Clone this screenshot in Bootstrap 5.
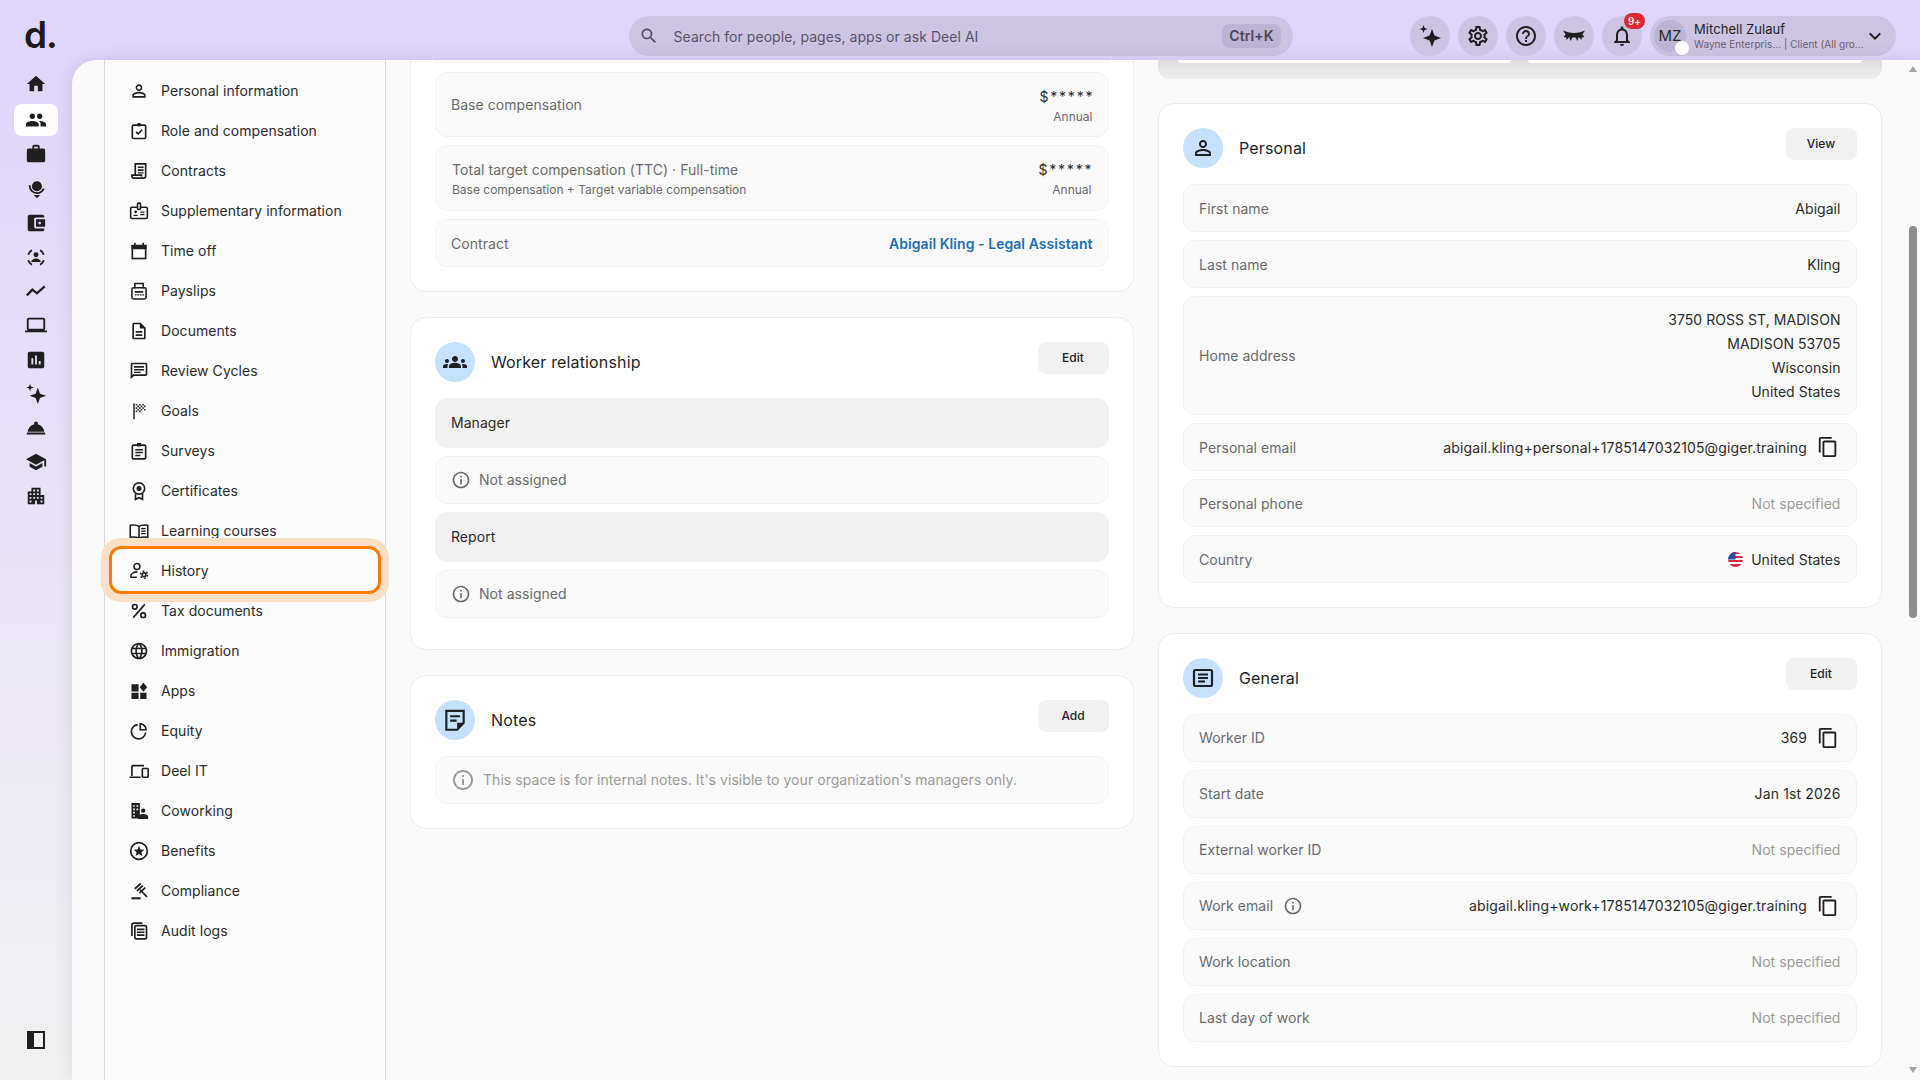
<!DOCTYPE html>
<html lang="en">
<head>
    <meta charset="UTF-8">
    <meta name="viewport" content="width=device-width, initial-scale=1.0">
    <title>Abigail Kling</title>
    <link rel="stylesheet" href="https://cdn.jsdelivr.net/npm/bootstrap@5.3.0/dist/css/bootstrap.min.css">
    <style>
        html, body { height: 100%; overflow: hidden; }
        body { font-family: Inter, "Liberation Sans", sans-serif; font-size: 14px; letter-spacing: .05px; color: #2b2b2b; background: #fafafa; }
        .ico { width: 20px; height: 20px; flex: none; fill: currentColor; color: #1f1f1f; }
        .ico-16 { width: 18px; height: 18px; }
        .ico-22 { width: 22px; height: 22px; margin-left: 1.5px; margin-right: 2px; }
        .ico-24 { width: 24px; height: 24px; }
        .ico-26 { width: 26px; height: 26px; }

        /* top bar */
        .top-bar { height: 60px; padding-top: 12px; background: #e0d6fa; flex: none; }
        .logo-box { width: 72px; padding-left: 24px; font-size: 37px; font-weight: 600; letter-spacing: -1px; line-height: 1; color: #1b1b1b; padding-bottom: 3px; }
        .search-box { width: 664px; height: 40px; margin-left: 557px; background: #cdc4e2; border-radius: 20px; padding: 0 12px 0 10px; color: #5a5466; }
        .search-box .ico { color: #55505f; margin-right: 14.5px; }
        .kbd-chip { background: #bdb3d3; border-radius: 8px; height: 24px; width: 59px; font-weight: 600; color: #4d4759; line-height: 24px; text-align: center; }
        .round-btn { width: 40px; height: 40px; background: #cdc4e2; border-radius: 50%; position: relative; }
        .note-badge { position: absolute; top: -3px; left: 22px; width: 21px; height: 16px; border-radius: 8px; background: #dc2a35; color: #fff; font-size: 10px; line-height: 16px; text-align: center; font-weight: 500; }
        .user-pill { width: 246px; height: 40px; background: #cdc4e2; border-radius: 20px; padding: 0 12px 0 4px; margin-right: 24px; }
        .user-avatar { width: 32px; height: 32px; background: #bdb3d3; border-radius: 50%; font-size: 15px; line-height: 32px; text-align: center; position: relative; color: #2b2b2b; flex: none; }
        .user-dot { position: absolute; right: -2.6px; bottom: -3px; width: 14px; height: 14px; background: #fff; border-radius: 50%; }
        .user-text { min-width: 0; }
        .user-name { font-size: 13px; line-height: 16px; color: #1f1f1f; }
        .user-sub { font-size: 10px; line-height: 14px; color: #66606f; white-space: nowrap; }

        /* rail */
        .lower-wrap { height: 1020px; background: linear-gradient(180deg, #e0d6fa 0%, #e8e3f5 45%, #f2f2f2 100%); }
        .side-rail { width: 72px; flex: none; padding: 8px 0 0; }
        .rail-item { width: 44px; height: 32px; margin: 0 auto 2.2px; border-radius: 8px; color: #1b1b1b; }
        .rail-item .ico { width: 22px; height: 22px; }
        .rail-item.is-on { background: #fff; margin-top: 4.2px; }
        .rail-item .ico.ico-16 { width: 18px; height: 18px; }
        .rail-foot { margin-top: 511.6px; }

        /* panel */
        .main-panel { background: #fafafa; border-top-left-radius: 24px; box-shadow: 0 0 18px rgba(0, 0, 0, .1); overflow: hidden; }
        .sub-nav { width: 282px; margin-left: 32px; flex: none; background: #fcfcfc; border-left: 1px solid #d9d9d9; border-right: 1px solid #d9d9d9; padding-top: 10.5px; }
        .sub-nav .nav-link { height: 40px; padding: 0 0 0 24px; display: flex; align-items: center; gap: 12px; color: #2b2b2b; position: relative; }
        .sub-nav .is-marked::after { content: ""; position: absolute; top: -4.5px; bottom: -3.5px; left: 4px; right: 4px; border: 3px solid #ff7a00; border-radius: 12px; box-shadow: 0 0 0 8px #fbe0c8; z-index: 1; }
        .content-area { padding-left: 24px; gap: 24.5px; }
        .col-left, .col-right { width: 723.5px; }

        /* cards */
        .card.info-card { --bs-card-border-radius: 16px; --bs-card-border-color: #ececec; --bs-card-spacer-x: 24px; --bs-card-spacer-y: 24px; margin-bottom: 24.5px; }
        .card.cut-top { border-top: 0; border-top-left-radius: 0; border-top-right-radius: 0; }
        .card.cut-top .card-body { padding-top: 0; }
        .head-disc { width: 40px; height: 40px; border-radius: 50%; background: #c5e1ff; flex: none; }
        .card-name { font-size: 16px; letter-spacing: .15px; color: #1f1f1f; margin-left: 16px; }
        .btn.soft-btn { width: 71px; height: 32px; padding: 0; background: #f2f2f2; border: 0; border-radius: 8px; font-size: 12px; font-weight: 500; color: #1f1f1f; }
        .info-rows { display: flex; flex-direction: column; gap: 8px; }
        .info-row { min-height: 48px; background: #fafafa; border: 1px solid #f1f1f1; border-radius: 12px; padding: 0 15px; display: flex; align-items: center; justify-content: space-between; flex: none; }
        .row-tip { min-height: 3px; height: 3px; border-top: 0; border-top-left-radius: 0; border-top-right-radius: 0; margin-bottom: 1px; }
        .row-base { height: 65px; }
        .row-base .val { margin-top: 3px; }
        .row-ttc { height: 66px; padding: 3px 16px 0; }
        .row-head { min-height: 50px; background: #f1f1f1; border-color: #f1f1f1; color: #2b2b2b; }
        .row-addr { height: 119px; }
        .lbl { color: #6b6b6b; }
        .val { color: #2b2b2b; text-align: right; }
        .wide-val { letter-spacing: .14px; }
        .none-val { color: #9b9b9b; }
        .tiny { font-size: 12px; line-height: 20px; color: #6b6b6b; letter-spacing: 0; }
        .masked { line-height: 21px; letter-spacing: 1.8px; margin-right: -1.8px; }
        .line-21 { line-height: 21px; }
        .line-24 { line-height: 24px; }
        .contract-link { color: #1f6fb2; font-weight: 600; text-decoration: none; }
        .note-text { color: #9b9b9b; }
        .info-ico { color: #6b6b6b; }
        .note-ico { color: #9b9b9b; }
        .tip-gap { gap: 10px; }
        .flag-disc { width: 15px; height: 15px; border-radius: 50%; flex: none; }
        .trail-gap { margin-bottom: 7.5px; }

        /* top stub of the right column */
        .stub-block { height: 18.5px; background: linear-gradient(180deg, #dcdcdc, #efefef); border-radius: 0 0 12px 12px; padding: 0 20px; gap: 17px; margin-bottom: 24.5px; }
        .stub-item { height: 3px; flex: 1; background: #fff; border-radius: 0 0 8px 8px; }

        /* scrollbar */
        .scroll-col { width: 15px; margin-left: auto; flex: none; padding: 6px 3px 7px 3px; }
        .scroll-up, .scroll-down { width: 0; height: 0; border-left: 4.5px solid transparent; border-right: 4.5px solid transparent; margin: 0 auto; }
        .scroll-up { border-bottom: 6px solid #a3a3a3; }
        .scroll-down { border-top: 6px solid #a3a3a3; margin-top: auto; }
        .scroll-thumb { width: 8px; height: 392px; margin: 154px auto 0; background: #8f8f8f; border-radius: 4px; }
    </style>
</head>
<body>
<svg class="d-none" xmlns="http://www.w3.org/2000/svg">
    <symbol id="i-home" viewBox="0 0 24 24"><path d="M10 20v-6h4v6h5v-8h3L12 3 2 12h3v8z"/></symbol>
    <symbol id="i-people" viewBox="0 0 24 24"><path d="M16 11c1.66 0 2.99-1.34 2.99-3S17.66 5 16 5c-1.66 0-3 1.34-3 3s1.34 3 3 3zm-8 0c1.66 0 2.99-1.34 2.99-3S9.66 5 8 5C6.34 5 5 6.34 5 8s1.34 3 3 3zm0 2c-2.33 0-7 1.17-7 3.5V19h14v-2.5c0-2.33-4.67-3.5-7-3.5zm8 0c-.29 0-.62.02-.97.05 1.16.84 1.97 1.97 1.97 3.45V19h6v-2.5c0-2.33-4.67-3.5-7-3.5z"/></symbol>
    <symbol id="i-work" viewBox="0 0 24 24"><path d="M20 6h-4V4c0-1.11-.89-2-2-2h-4c-1.11 0-2 .89-2 2v2H4c-1.11 0-1.99.89-1.99 2L2 19c0 1.11.89 2 2 2h16c1.11 0 2-.89 2-2V8c0-1.11-.89-2-2-2zm-6 0h-4V4h4v2z"/></symbol>
    <symbol id="i-orb" viewBox="0 0 24 24"><circle cx="13" cy="9" r="5.5"/><path d="M5 8c0 5 3.5 8.500 8 8.500 3.500 0 6-2 7.500-5" fill="none" stroke="currentColor" stroke-width="2"/><path d="M9.500 18.500h7L13 22z"/></symbol>
    <symbol id="i-wallet" viewBox="0 0 24 24"><path d="M21 18v1c0 1.100-.9 2-2 2H5c-1.110 0-2-.9-2-2V5c0-1.100.89-2 2-2h14c1.100 0 2 .9 2 2v1h-9c-1.110 0-2 .9-2 2v8c0 1.100.89 2 2 2h9zm-9-2h10V8H12v8zm4-2.500c-.83 0-1.500-.67-1.500-1.500s.67-1.500 1.500-1.500 1.500.67 1.500 1.500-.67 1.500-1.500 1.500z"/></symbol>
    <symbol id="i-recog" viewBox="0 0 24 24"><circle cx="12" cy="9.500" r="2.700"/><path d="M6.800 17.500c0-2.700 3.200-4 5.200-4s5.200 1.300 5.200 4z"/><path d="M3.500 9.500a9 9 0 0 1 4-5M20.500 9.500a9 9 0 0 0-4-5M3.500 15.500a9 9 0 0 0 4 5M20.500 15.500a9 9 0 0 1-4 5" fill="none" stroke="currentColor" stroke-width="2"/></symbol>
    <symbol id="i-zigzag" viewBox="0 0 24 24"><path d="M2 17l6-6.500 5 4L21.500 7" fill="none" stroke="currentColor" stroke-width="2.500"/></symbol>
    <symbol id="i-laptop" viewBox="0 0 24 24"><path d="M20 18c1.100 0 1.990-.9 1.990-2L22 6c0-1.100-.9-2-2-2H4c-1.100 0-2 .9-2 2v10c0 1.100.9 2 2 2H0v2h24v-2h-4zM4 6h16v10H4V6z"/></symbol>
    <symbol id="i-chart" viewBox="0 0 24 24"><path d="M19 3H5c-1.100 0-2 .9-2 2v14c0 1.100.9 2 2 2h14c1.100 0 2-.9 2-2V5c0-1.100-.9-2-2-2zM9 17H7v-7h2v7zm4 0h-2V7h2v10zm4 0h-2v-4h2v4z"/></symbol>
    <symbol id="i-sparkle" viewBox="0 0 24 24"><path d="M14 5l2.400 6.600L23 14l-6.600 2.400L14 23l-2.400-6.600L5 14l6.600-2.400zM5.500 1l1.100 2.900L9.500 5 6.600 6.100 5.500 9 4.400 6.100 1.500 5l2.900-1.100z"/></symbol>
    <symbol id="i-dome" viewBox="0 0 24 24"><path d="M2 17h20v2H2zm11.840-9.210c.1-.24.16-.51.16-.79 0-1.100-.9-2-2-2s-2 .9-2 2c0 .28.06.55.16.79C6.250 8.600 3.270 11.930 3 16h18c-.27-4.070-3.250-7.400-7.160-8.210z"/></symbol>
    <symbol id="i-school" viewBox="0 0 24 24"><path d="M5 13.180v4L12 21l7-3.820v-4L12 17l-7-3.820zM12 3L1 9l11 6 9-4.910V17h2V9L12 3z"/></symbol>
    <symbol id="i-city" viewBox="0 0 24 24"><path d="M17 11V3H7v4H3v14h8v-4h2v4h8V11h-4zM7 19H5v-2h2v2zm0-4H5v-2h2v2zm0-4H5V9h2v2zm4 4H9v-2h2v2zm0-4H9V9h2v2zm0-4H9V5h2v2zm4 8h-2v-2h2v2zm0-4h-2V9h2v2zm0-4h-2V5h2v2zm4 12h-2v-2h2v2zm0-4h-2v-2h2v2z"/></symbol>
    <symbol id="i-panel" viewBox="0 0 18 18"><path fill-rule="evenodd" d="M0 0h18v18H0zM7 2v14h9V2z"/></symbol>
    <symbol id="i-person" viewBox="0 0 24 24"><path d="M12 5.900c1.160 0 2.100.94 2.100 2.100s-.94 2.100-2.100 2.100S9.900 9.160 9.900 8s.94-2.100 2.100-2.100m0 9c2.970 0 6.100 1.460 6.100 2.100v1.100H5.900V17c0-.64 3.130-2.100 6.100-2.100M12 4C9.790 4 8 5.790 8 8s1.790 4 4 4 4-1.790 4-4-1.790-4-4-4zm0 9c-2.670 0-8 1.340-8 4v3h16v-3c0-2.660-5.330-4-8-4z"/></symbol>
    <symbol id="i-role" viewBox="0 0 24 24"><g fill="none" stroke="currentColor" stroke-width="2"><rect x="4" y="5" width="16" height="16" rx="1.500"/><path d="M8.500 13l2.500 2.500 4.800-5"/></g><rect x="10" y="2.500" width="4" height="4"/></symbol>
    <symbol id="i-contract" viewBox="0 0 24 24"><path d="M7.500 17V3.500H20V18a2.500 2.500 0 0 1-2.500 2.500H6A2.500 2.500 0 0 1 3.500 18v-1H15v1.500" fill="none" stroke="currentColor" stroke-width="2"/><path d="M10.500 6.500h7v2h-7zM10.500 10h7v2h-7zM10.500 13.500h7v1.500h-7z"/></symbol>
    <symbol id="i-badge" viewBox="0 0 24 24"><g fill="none" stroke="currentColor" stroke-width="1.900"><rect x="2" y="7.500" width="20" height="13.500" rx="1.500"/><rect x="10.200" y="2.500" width="3.600" height="7.500" rx="1" fill="#fcfcfc"/></g><circle cx="8" cy="13" r="1.700"/><path d="M5 18c0-2 6-2 6 0zM13.500 12.500h5V14h-5zM13.500 15.500h5V17h-5z"/></symbol>
    <symbol id="i-calendar" viewBox="0 0 24 24"><rect x="4" y="6" width="16" height="15" fill="none" stroke="currentColor" stroke-width="2"/><path d="M3 4.500h3V2h2v2.500h8V2h2v2.500h3V10H3z"/></symbol>
    <symbol id="i-fax" viewBox="0 0 24 24"><g fill="none" stroke="currentColor" stroke-width="1.900"><rect x="3.500" y="8" width="17" height="13.500" rx="2"/><path d="M7 9V3h10v6"/></g><path d="M7 12h10v2H7zM7 16h2v1.500H7zM10 16h2v1.500h-2zM13 16h2v1.500h-2zM16 16h2v1.500h-2z"/></symbol>
    <symbol id="i-doc" viewBox="0 0 24 24"><path d="M8 16h8v2H8zm0-4h8v2H8zm6-10H6c-1.100 0-2 .9-2 2v16c0 1.100.89 2 1.990 2H18c1.100 0 2-.9 2-2V8l-6-6zm4 18H6V4h7v5h5v11z"/></symbol>
    <symbol id="i-review" viewBox="0 0 24 24"><path d="M20 2H4c-1.100 0-2 .9-2 2v18l4-4h14c1.100 0 2-.9 2-2V4c0-1.100-.9-2-2-2zm0 14H5.170L4 17.170V4h16v12z M6 6h12v2H6z M6 9.500h12v2H6z M6 13h8v1.500H6z"/></symbol>
    <symbol id="i-flag" viewBox="0 0 24 24"><path d="M5 3h2v19H5zM8 3.500h2v2H8zM12 3.500h2v2h-2zM16 3.500h2v2h-2zM10 5.500h2v2h-2zM14 5.500h2v2h-2zM18 5.500h2v2h-2zM8 7.500h2v2H8zM12 7.500h2v2h-2zM16 7.500h2v2h-2zM10 9.500h2v2h-2zM14 9.500h2v2h-2zM18 9.500h2v2h-2zM8 11.500h2v2H8zM12 11.500h2v2h-2z" opacity=".85"/></symbol>
    <symbol id="i-survey" viewBox="0 0 24 24"><rect x="4" y="5" width="16" height="16.500" rx="1.500" fill="none" stroke="currentColor" stroke-width="2"/><path d="M9.500 2.500h5v4h-5zM7.500 9.500h9v1.800h-9zM7.500 13h9v1.800h-9zM7.500 16.500h6v1.800h-6z"/></symbol>
    <symbol id="i-cert" viewBox="0 0 24 24"><g fill="none" stroke="currentColor" stroke-width="2"><circle cx="12" cy="9" r="6.800"/><path d="M7.800 15v7l4.200-2 4.200 2v-7"/></g><circle cx="12" cy="9" r="3"/></symbol>
    <symbol id="i-book" viewBox="0 0 24 24"><path d="M12 6.500C10 5 6 4.500 1.500 5v14.500c4-.5 8.500 0 10.500 1.300 2-1.300 6.500-1.800 10.500-1.300V5C18 4.500 14 5 12 6.500zM12 6.500v14" fill="none" stroke="currentColor" stroke-width="1.900"/><path d="M14.500 8.500h5.500V10h-5.500zM14.500 11.500h5.500V13h-5.500zM14.500 14.500h5.500V16h-5.500z"/></symbol>
    <symbol id="i-history" viewBox="0 0 24 24"><g fill="none" stroke="currentColor" stroke-width="1.900"><circle cx="9.500" cy="6.500" r="3.600"/><path d="M1.500 19.500h8M2 19c0-4 4-6 8-6"/><circle cx="18" cy="16.500" r="2.300"/></g><circle cx="18" cy="16.500" r="4.300" fill="none" stroke="currentColor" stroke-width="1.700" stroke-dasharray="2.200 2.300"/></symbol>
    <symbol id="i-percent" viewBox="0 0 24 24"><g fill="none" stroke="currentColor" stroke-width="2"><circle cx="7" cy="7" r="2.800"/><circle cx="17" cy="17" r="2.800"/><path d="M19 4L5 20"/></g></symbol>
    <symbol id="i-globe" viewBox="0 0 24 24"><path d="M11.990 2C6.470 2 2 6.480 2 12s4.470 10 9.990 10C17.520 22 22 17.520 22 12S17.520 2 11.990 2zm6.930 6h-2.950c-.32-1.250-.78-2.450-1.380-3.560 1.840.63 3.370 1.910 4.330 3.560zM12 4.040c.83 1.200 1.480 2.530 1.910 3.960h-3.820c.43-1.430 1.080-2.760 1.910-3.960zM4.260 14C4.100 13.360 4 12.690 4 12s.1-1.360.26-2h3.380c-.08.66-.14 1.320-.14 2 0 .68.06 1.340.14 2H4.260zm.82 2h2.950c.32 1.250.78 2.450 1.380 3.560-1.840-.63-3.370-1.900-4.330-3.560zm2.950-8H5.080c.96-1.660 2.490-2.930 4.330-3.560C8.810 5.550 8.350 6.750 8.030 8zM12 19.960c-.83-1.200-1.480-2.530-1.910-3.960h3.820c-.43 1.430-1.080 2.760-1.910 3.960zM14.340 14H9.660c-.09-.66-.16-1.320-.16-2 0-.68.07-1.350.16-2h4.680c.09.650.16 1.320.16 2 0 .68-.07 1.340-.16 2zm.25 5.560c.6-1.110 1.060-2.310 1.380-3.560h2.950c-.96 1.650-2.490 2.930-4.330 3.560zM16.360 14c.08-.66.14-1.320.14-2 0-.68-.06-1.340-.14-2h3.380c.16.640.26 1.310.26 2s-.1 1.360-.26 2h-3.380z"/></symbol>
    <symbol id="i-apps" viewBox="0 0 24 24"><path d="M3 4h8.500v8.500H3zM3 14h8.500v7.500H3zM13.500 14H21v7.500h-7.500zM17.200 2l4.600 5.500-4.600 5.500-4.300-5.500z"/></symbol>
    <symbol id="i-pie" viewBox="0 0 24 24"><path d="M10.500 4.300A8.600 8.600 0 1 0 20 13.800M13.500 3.500v7h7a7 7 0 0 0-7-7z" fill="none" stroke="currentColor" stroke-width="2"/></symbol>
    <symbol id="i-device" viewBox="0 0 24 24"><path d="M3.500 18V6.500a1 1 0 0 1 1-1H18M0.500 19.500H14" fill="none" stroke="currentColor" stroke-width="2"/><rect x="16" y="9" width="7" height="10.500" rx="1" fill="none" stroke="currentColor" stroke-width="2"/></symbol>
    <symbol id="i-cowork" viewBox="0 0 24 24"><path fill-rule="evenodd" d="M3 2.500h10V21H3zM5 5v2h2V5zM9 5v2h2V5zM5 9v2h2V9zM9 9v2h2V9zM5 13v2h2v-2zM5 17v2h2v-2z"/><circle cx="17" cy="11.500" r="2.600"/><path d="M11 21.500v-2.500c0-2.500 4-3.500 6-3.500s6 1 6 3.500v2.500z"/></symbol>
    <symbol id="i-star" viewBox="0 0 24 24"><circle cx="12" cy="12" r="10" fill="none" stroke="currentColor" stroke-width="2"/><path d="M12 5.800l1.800 4.300 4.700.4-3.600 3 1.100 4.600-4-2.500-4 2.500 1.100-4.600-3.600-3 4.700-.4z"/></symbol>
    <symbol id="i-gavel" viewBox="0 0 24 24"><path d="M3 19.500h11V22H3z"/><path d="M7 9.500l7-6.500M9.500 12l7-6.500M12.500 14.500l7-6.500M13.500 10.500l8 8.500" fill="none" stroke="currentColor" stroke-width="2.100"/></symbol>
    <symbol id="i-audit" viewBox="0 0 24 24"><rect x="7" y="5.500" width="14" height="16" rx="2" fill="none" stroke="currentColor" stroke-width="2"/><path d="M3.500 18V5a2.500 2.500 0 0 1 2.500-2.500h10" fill="none" stroke="currentColor" stroke-width="2"/><path d="M9.500 9h9v2h-9zM9.500 12.500h9v2h-9zM9.500 16h9v2h-9z"/></symbol>
    <symbol id="i-search" viewBox="0 0 24 24"><path d="M15.500 14h-.79l-.28-.27C15.410 12.590 16 11.110 16 9.500 16 5.910 13.090 3 9.500 3S3 5.910 3 9.500 5.910 16 9.500 16c1.610 0 3.090-.59 4.230-1.570l.27.28v.79l5 4.990L20.490 19l-4.990-5zm-6 0C7.010 14 5 11.990 5 9.500S7.010 5 9.500 5 14 7.010 14 9.500 11.990 14 9.500 14z"/></symbol>
    <symbol id="i-gear" viewBox="0 0 24 24"><path d="M19.430 12.980c.04-.32.07-.64.07-.98 0-.34-.03-.66-.07-.98l2.110-1.650c.19-.15.24-.42.12-.64l-2-3.460c-.09-.16-.26-.25-.44-.25-.06 0-.12.01-.17.03l-2.490 1c-.52-.4-1.080-.73-1.690-.98l-.38-2.650C14.460 2.180 14.250 2 14 2h-4c-.25 0-.46.18-.49.42l-.38 2.650c-.61.25-1.170.59-1.690.98l-2.490-1c-.06-.02-.12-.03-.18-.03-.17 0-.34.09-.43.25l-2 3.460c-.13.22-.07.49.12.64l2.110 1.650c-.04.32-.07.65-.07.98 0 .33.03.66.07.98l-2.110 1.650c-.19.15-.24.42-.12.64l2 3.460c.09.16.26.25.44.25.06 0 .12-.01.17-.03l2.490-1c.52.4 1.080.73 1.690.98l.38 2.650c.03.24.24.42.49.42h4c.25 0 .46-.18.49-.42l.38-2.650c.61-.25 1.170-.59 1.690-.98l2.490 1c.06.02.12.03.18.03.17 0 .34-.09.43-.25l2-3.460c.12-.22.07-.49-.12-.64l-2.110-1.650zm-1.980-1.710c.04.31.05.52.05.73 0 .21-.02.43-.05.73l-.14 1.130.89.7 1.080.84-.7 1.210-1.270-.51-1.040-.42-.9.68c-.43.32-.84.56-1.250.73l-1.060.43-.16 1.130-.2 1.350h-1.400l-.19-1.350-.16-1.130-1.060-.43c-.43-.18-.83-.41-1.230-.71l-.91-.7-1.060.43-1.270.51-.7-1.210 1.080-.84.89-.7-.14-1.130c-.03-.31-.05-.54-.05-.74s.02-.43.05-.73l.14-1.130-.89-.7-1.080-.84.7-1.210 1.270.51 1.040.42.9-.68c.43-.32.84-.56 1.250-.73l1.060-.43.16-1.130.2-1.350h1.390l.19 1.350.16 1.130 1.060.43c.43.18.83.41 1.230.71l.91.7 1.060-.43 1.270-.51.7 1.210-1.070.85-.89.7.14 1.130zM12 8c-2.210 0-4 1.790-4 4s1.790 4 4 4 4-1.790 4-4-1.790-4-4-4zm0 6c-1.100 0-2-.9-2-2s.9-2 2-2 2 .9 2 2-.9 2-2 2z"/></symbol>
    <symbol id="i-help" viewBox="0 0 24 24"><path d="M11 18h2v-2h-2v2zm1-16C6.480 2 2 6.480 2 12s4.480 10 10 10 10-4.480 10-10S17.520 2 12 2zm0 18c-4.410 0-8-3.590-8-8s3.590-8 8-8 8 3.590 8 8-3.590 8-8 8zm0-14c-2.210 0-4 1.790-4 4h2c0-1.100.9-2 2-2s2 .9 2 2c0 2-3 1.750-3 5h2c0-2.250 3-2.500 3-5 0-2.210-1.790-4-4-4z"/></symbol>
    <symbol id="i-lash" viewBox="0 0 24 24"><path d="M1 6.500c3.500 1.500 6.500 2.500 11 2.500s7.500-1 11-2.500l-2.500 3.800 1.800 2.800-2.600.3-.2 2.600-2.800-2.900-1.200 3.900-2.200-3.800-1.300.2-1.300-.2-2.200 3.800-1.200-3.900-2.800 2.900-.2-2.600-2.600-.3 1.800-2.800z"/></symbol>
    <symbol id="i-bell" viewBox="0 0 24 24"><path d="M12 22c1.100 0 2-.9 2-2h-4c0 1.100.9 2 2 2zm6-6v-5c0-3.070-1.630-5.640-4.500-6.320V4c0-.83-.67-1.500-1.500-1.500s-1.500.67-1.500 1.500v.68C7.640 5.360 6 7.920 6 11v5l-2 2v1h16v-1l-2-2zm-2 1H8v-6c0-2.480 1.510-4.500 4-4.500s4 2.020 4 4.500v6z"/></symbol>
    <symbol id="i-chev" viewBox="0 0 24 24"><path d="M5 8.500l7 7 7-7" fill="none" stroke="currentColor" stroke-width="2.800"/></symbol>
    <symbol id="i-info" viewBox="0 0 24 24"><path d="M11 7h2v2h-2zm0 4h2v6h-2zm1-9C6.480 2 2 6.480 2 12s4.480 10 10 10 10-4.480 10-10S17.520 2 12 2zm0 18c-4.410 0-8-3.590-8-8s3.590-8 8-8 8 3.590 8 8-3.590 8-8 8z"/></symbol>
    <symbol id="i-copy" viewBox="0 0 24 24"><path d="M16 1H4c-1.100 0-2 .9-2 2v15h2V3h12V1zm3 4H8c-1.100 0-2 .9-2 2v14c0 1.100.9 2 2 2h11c1.100 0 2-.9 2-2V7c0-1.100-.9-2-2-2zm0 16H8V7h11v14z"/></symbol>
    <symbol id="i-groups" viewBox="0 0 24 24"><path d="M12 12.750c1.630 0 3.070.39 4.240.9 1.080.48 1.760 1.560 1.760 2.730V18H6v-1.610c0-1.180.68-2.260 1.760-2.730 1.170-.52 2.610-.91 4.240-.91zM4 13c1.100 0 2-.9 2-2s-.9-2-2-2-2 .9-2 2 .9 2 2 2zm1.130 1.100c-.37-.06-.74-.1-1.130-.1-.99 0-1.930.21-2.780.58C.48 14.900 0 15.620 0 16.430V18h4.500v-1.610c0-.83.23-1.610.63-2.290zM20 13c1.100 0 2-.9 2-2s-.9-2-2-2-2 .9-2 2 .9 2 2 2zm4 3.430c0-.81-.48-1.530-1.220-1.850-.85-.37-1.790-.58-2.780-.58-.39 0-.76.04-1.130.1.4.68.63 1.460.63 2.290V18H24v-1.570zM12 6c1.660 0 3 1.340 3 3s-1.340 3-3 3-3-1.340-3-3 1.340-3 3-3z"/></symbol>
    <symbol id="i-note" viewBox="0 0 24 24"><path d="M4 3.500h16v11L14 21H4z" fill="none" stroke="currentColor" stroke-width="2"/><path d="M7.500 7.500h9v2h-9zM7.500 11.500h6v2h-6zM14 21v-6.500h6z"/></symbol>
    <symbol id="i-article" viewBox="0 0 24 24"><rect x="3" y="4" width="18" height="16" rx="1.500" fill="none" stroke="currentColor" stroke-width="2.200"/><path d="M7 7.500h10v2H7zM7 11h10v2H7zM7 14.500h7v2H7z"/></symbol>
    <symbol id="i-usflag" viewBox="0 0 15 15"><path fill="#fff" d="M0 0h15v15H0z"/><path fill="#d92b3a" d="M0 0h15v2H0zM7 4h8v2H7zM0 8h15v2H0zM0 12h15v3H0z"/><path fill="#2f4da0" d="M0 0h7.500v7.500H0z"/></symbol>
</svg>

<div class="d-flex flex-column vh-100">
    <header class="top-bar d-flex align-items-center">
        <div class="logo-box">d.</div>
        <div class="search-box d-flex align-items-center">
            <svg class="ico"><use href="#i-search"/></svg>
            <span class="flex-grow-1">Search for people, pages, apps or ask Deel AI</span>
            <span class="kbd-chip">Ctrl+K</span>
        </div>
        <div class="d-flex align-items-center gap-2 ms-auto">
            <div class="round-btn d-flex align-items-center justify-content-center"><svg class="ico ico-24"><use href="#i-sparkle"/></svg></div>
            <div class="round-btn d-flex align-items-center justify-content-center"><svg class="ico ico-24"><use href="#i-gear"/></svg></div>
            <div class="round-btn d-flex align-items-center justify-content-center"><svg class="ico ico-24"><use href="#i-help"/></svg></div>
            <div class="round-btn d-flex align-items-center justify-content-center"><svg class="ico ico-24"><use href="#i-lash"/></svg></div>
            <div class="round-btn d-flex align-items-center justify-content-center"><svg class="ico ico-24"><use href="#i-bell"/></svg><span class="note-badge">9+</span></div>
            <div class="user-pill d-flex align-items-center">
                <div class="user-avatar">MZ<span class="user-dot"></span></div>
                <div class="user-text ms-2 flex-grow-1">
                    <div class="user-name">Mitchell Zulauf</div>
                    <div class="user-sub">Wayne Enterpris... | Client (All gro...</div>
                </div>
                <svg class="ico ico-16"><use href="#i-chev"/></svg>
            </div>
        </div>
    </header>

    <div class="lower-wrap d-flex">
        <aside class="side-rail">
            <div class="rail-item d-flex align-items-center justify-content-center"><svg class="ico"><use href="#i-home"/></svg></div>
            <div class="rail-item is-on d-flex align-items-center justify-content-center"><svg class="ico"><use href="#i-people"/></svg></div>
            <div class="rail-item d-flex align-items-center justify-content-center"><svg class="ico"><use href="#i-work"/></svg></div>
            <div class="rail-item d-flex align-items-center justify-content-center"><svg class="ico"><use href="#i-orb"/></svg></div>
            <div class="rail-item d-flex align-items-center justify-content-center"><svg class="ico"><use href="#i-wallet"/></svg></div>
            <div class="rail-item d-flex align-items-center justify-content-center"><svg class="ico"><use href="#i-recog"/></svg></div>
            <div class="rail-item d-flex align-items-center justify-content-center"><svg class="ico"><use href="#i-zigzag"/></svg></div>
            <div class="rail-item d-flex align-items-center justify-content-center"><svg class="ico"><use href="#i-laptop"/></svg></div>
            <div class="rail-item d-flex align-items-center justify-content-center"><svg class="ico"><use href="#i-chart"/></svg></div>
            <div class="rail-item d-flex align-items-center justify-content-center"><svg class="ico"><use href="#i-sparkle"/></svg></div>
            <div class="rail-item d-flex align-items-center justify-content-center"><svg class="ico"><use href="#i-dome"/></svg></div>
            <div class="rail-item d-flex align-items-center justify-content-center"><svg class="ico"><use href="#i-school"/></svg></div>
            <div class="rail-item d-flex align-items-center justify-content-center"><svg class="ico"><use href="#i-city"/></svg></div>
            <div class="rail-item rail-foot d-flex align-items-center justify-content-center"><svg class="ico ico-16"><use href="#i-panel"/></svg></div>
        </aside>

        <main class="main-panel flex-grow-1 d-flex">
            <nav class="sub-nav nav flex-column flex-nowrap">
                <a class="nav-link" href="#"><svg class="ico"><use href="#i-person"/></svg>Personal information</a>
                <a class="nav-link" href="#"><svg class="ico"><use href="#i-role"/></svg>Role and compensation</a>
                <a class="nav-link" href="#"><svg class="ico"><use href="#i-contract"/></svg>Contracts</a>
                <a class="nav-link" href="#"><svg class="ico"><use href="#i-badge"/></svg>Supplementary information</a>
                <a class="nav-link" href="#"><svg class="ico"><use href="#i-calendar"/></svg>Time off</a>
                <a class="nav-link" href="#"><svg class="ico"><use href="#i-fax"/></svg>Payslips</a>
                <a class="nav-link" href="#"><svg class="ico"><use href="#i-doc"/></svg>Documents</a>
                <a class="nav-link" href="#"><svg class="ico"><use href="#i-review"/></svg>Review Cycles</a>
                <a class="nav-link" href="#"><svg class="ico"><use href="#i-flag"/></svg>Goals</a>
                <a class="nav-link" href="#"><svg class="ico"><use href="#i-survey"/></svg>Surveys</a>
                <a class="nav-link" href="#"><svg class="ico"><use href="#i-cert"/></svg>Certificates</a>
                <a class="nav-link" href="#"><svg class="ico"><use href="#i-book"/></svg>Learning courses</a>
                <a class="nav-link is-marked" href="#"><svg class="ico"><use href="#i-history"/></svg>History</a>
                <a class="nav-link" href="#"><svg class="ico"><use href="#i-percent"/></svg>Tax documents</a>
                <a class="nav-link" href="#"><svg class="ico"><use href="#i-globe"/></svg>Immigration</a>
                <a class="nav-link" href="#"><svg class="ico"><use href="#i-apps"/></svg>Apps</a>
                <a class="nav-link" href="#"><svg class="ico"><use href="#i-pie"/></svg>Equity</a>
                <a class="nav-link" href="#"><svg class="ico"><use href="#i-device"/></svg>Deel IT</a>
                <a class="nav-link" href="#"><svg class="ico"><use href="#i-cowork"/></svg>Coworking</a>
                <a class="nav-link" href="#"><svg class="ico"><use href="#i-star"/></svg>Benefits</a>
                <a class="nav-link" href="#"><svg class="ico"><use href="#i-gavel"/></svg>Compliance</a>
                <a class="nav-link" href="#"><svg class="ico"><use href="#i-audit"/></svg>Audit logs</a>
            </nav>

            <div class="content-area d-flex">
                <section class="col-left">
                    <div class="card info-card cut-top">
                        <div class="card-body info-rows">
                            <div class="info-row row-tip"></div>
                            <div class="info-row row-base">
                                <span class="lbl">Base compensation</span>
                                <div class="val"><div class="masked">$*****</div><div class="tiny">Annual</div></div>
                            </div>
                            <div class="info-row row-ttc">
                                <div><div class="lbl line-21">Total target compensation (TTC) · Full-time</div><div class="tiny">Base compensation + Target variable compensation</div></div>
                                <div class="val"><div class="masked">$*****</div><div class="tiny">Annual</div></div>
                            </div>
                            <div class="info-row">
                                <span class="lbl">Contract</span>
                                <a class="contract-link" href="#">Abigail Kling - Legal Assistant</a>
                            </div>
                        </div>
                    </div>

                    <div class="card info-card">
                        <div class="card-body">
                            <div class="d-flex align-items-start mb-3">
                                <div class="head-disc d-flex align-items-center justify-content-center"><svg class="ico ico-24"><use href="#i-groups"/></svg></div>
                                <span class="card-name align-self-center">Worker relationship</span>
                                <button class="btn soft-btn ms-auto">Edit</button>
                            </div>
                            <div class="info-rows trail-gap">
                                <div class="info-row row-head">Manager</div>
                                <div class="info-row justify-content-start gap-2 lbl"><svg class="ico info-ico"><use href="#i-info"/></svg>Not assigned</div>
                                <div class="info-row row-head">Report</div>
                                <div class="info-row justify-content-start gap-2 lbl"><svg class="ico info-ico"><use href="#i-info"/></svg>Not assigned</div>
                            </div>
                        </div>
                    </div>

                    <div class="card info-card">
                        <div class="card-body">
                            <div class="d-flex align-items-start mb-3">
                                <div class="head-disc d-flex align-items-center justify-content-center"><svg class="ico ico-26"><use href="#i-note"/></svg></div>
                                <span class="card-name align-self-center">Notes</span>
                                <button class="btn soft-btn ms-auto">Add</button>
                            </div>
                            <div class="info-rows">
                                <div class="info-row justify-content-start gap-2 note-text"><svg class="ico ico-24 note-ico"><use href="#i-info"/></svg>This space is for internal notes. It's visible to your organization's managers only.</div>
                            </div>
                        </div>
                    </div>
                </section>

                <section class="col-right">
                    <div class="stub-block d-flex"><div class="stub-item"></div><div class="stub-item"></div></div>

                    <div class="card info-card">
                        <div class="card-body">
                            <div class="d-flex align-items-start mb-3">
                                <div class="head-disc d-flex align-items-center justify-content-center"><svg class="ico ico-24"><use href="#i-person"/></svg></div>
                                <span class="card-name align-self-center">Personal</span>
                                <button class="btn soft-btn ms-auto">View</button>
                            </div>
                            <div class="info-rows">
                                <div class="info-row"><span class="lbl">First name</span><span class="val">Abigail</span></div>
                                <div class="info-row"><span class="lbl">Last name</span><span class="val">Kling</span></div>
                                <div class="info-row row-addr"><span class="lbl">Home address</span><div class="val line-24">3750 ROSS ST, MADISON<br>MADISON 53705<br>Wisconsin<br>United States</div></div>
                                <div class="info-row"><span class="lbl">Personal email</span><div class="val wide-val d-flex align-items-center gap-2">abigail.kling+personal+1785147032105@giger.training<svg class="ico ico-22"><use href="#i-copy"/></svg></div></div>
                                <div class="info-row"><span class="lbl">Personal phone</span><span class="none-val">Not specified</span></div>
                                <div class="info-row"><span class="lbl">Country</span><div class="val d-flex align-items-center gap-2"><svg class="flag-disc"><use href="#i-usflag"/></svg>United States</div></div>
                            </div>
                        </div>
                    </div>

                    <div class="card info-card">
                        <div class="card-body">
                            <div class="d-flex align-items-start mb-3">
                                <div class="head-disc d-flex align-items-center justify-content-center"><svg class="ico ico-24"><use href="#i-article"/></svg></div>
                                <span class="card-name align-self-center">General</span>
                                <button class="btn soft-btn ms-auto">Edit</button>
                            </div>
                            <div class="info-rows">
                                <div class="info-row"><span class="lbl">Worker ID</span><div class="val d-flex align-items-center gap-2">369<svg class="ico ico-22"><use href="#i-copy"/></svg></div></div>
                                <div class="info-row"><span class="lbl">Start date</span><span class="val wide-val">Jan 1st 2026</span></div>
                                <div class="info-row"><span class="lbl">External worker ID</span><span class="none-val">Not specified</span></div>
                                <div class="info-row"><span class="lbl d-flex align-items-center tip-gap">Work email <svg class="ico info-ico"><use href="#i-info"/></svg></span><div class="val wide-val d-flex align-items-center gap-2">abigail.kling+work+1785147032105@giger.training<svg class="ico ico-22"><use href="#i-copy"/></svg></div></div>
                                <div class="info-row"><span class="lbl">Work location</span><span class="none-val">Not specified</span></div>
                                <div class="info-row"><span class="lbl">Last day of work</span><span class="none-val">Not specified</span></div>
                            </div>
                        </div>
                    </div>
                </section>
            </div>

            <div class="scroll-col d-flex flex-column">
                <div class="scroll-up"></div>
                <div class="scroll-thumb"></div>
                <div class="scroll-down"></div>
            </div>
        </main>
    </div>
</div>
<script src="https://cdn.jsdelivr.net/npm/bootstrap@5.3.0/dist/js/bootstrap.bundle.min.js"></script>
</body>
</html>
